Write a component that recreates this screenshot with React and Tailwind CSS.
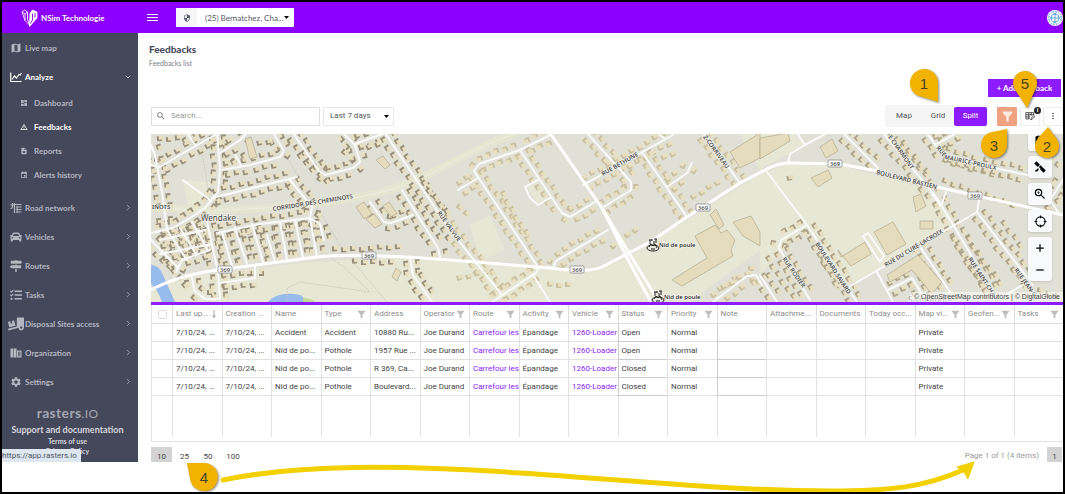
import { Fragment } from "react";
import {
  MdMap,
  MdDashboard,
  MdWarningAmber,
  MdDescription,
  MdEvent,
  MdSettings,
  MdFilterAlt,
  MdSearch,
  MdMoreVert,
  MdZoomIn,
  MdSecurity,
} from "react-icons/md";
import { FaCar, FaMapSigns, FaTasks, FaTruckLoading } from "react-icons/fa";
import { ChevronDown, ChevronRight } from "lucide-react";

/* ---------- sidebar ---------- */

function RoadNetworkIcon({ className }) {
  return (
    <svg viewBox="0 0 24 24" className={className} fill="none" stroke="currentColor" strokeWidth="2.4">
      <path d="M1 6h7M5 2v8q0 3-4 3M9 2v20M9 5h14M14 10h9M14 15h9M14 20h9M14 8v14" />
    </svg>
  );
}

function OrganizationIcon({ className }) {
  return (
    <svg viewBox="0 0 24 24" className={className} fill="currentColor">
      <path d="M1 3h6v18H1zM8 3h5v18H8zM14 7h9v14h-9zm2.5 2.5v9h4v-9z" fillRule="evenodd" />
      <path d="M17.5 11h2v2h-2zM17.5 15h2v2h-2z" />
    </svg>
  );
}

function AnalyzeIcon({ className }) {
  return (
    <svg viewBox="0 0 24 24" className={className} fill="none" stroke="currentColor" strokeWidth="2.4">
      <path d="M1.5 3v18H23" />
      <path d="M4 17l5-7 4 4 5-7 2 1 3-4" />
    </svg>
  );
}

const SUB_ITEMS = [
  { label: "Dashboard", Icon: MdDashboard },
  { label: "Feedbacks", Icon: MdWarningAmber, active: true },
  { label: "Reports", Icon: MdDescription },
  { label: "Alerts history", Icon: MdEvent },
];

const ITEMS = [
  { label: "Road network", Icon: RoadNetworkIcon },
  { label: "Vehicles", Icon: FaCar },
  { label: "Routes", Icon: FaMapSigns },
  { label: "Tasks", Icon: FaTasks },
  { label: "Disposal Sites access", Icon: FaTruckLoading, wide: true },
  { label: "Organization", Icon: OrganizationIcon },
  { label: "Settings", Icon: MdSettings },
];

function Sidebar() {
  return (
    <nav className="w-[136px] shrink-0 bg-[#45475b] font-['Lato',sans-serif] text-[8px] font-bold text-[#b4b6c2]">
      <a href="#live" className="flex h-[29px] items-center gap-[3px] pl-2">
        <MdMap className="size-3" />
        <span>Live map</span>
      </a>
      <button className="flex h-[29px] w-full items-center gap-[3px] pl-2 pr-[6px] text-white">
        <AnalyzeIcon className="size-3" />
        <span className="flex-1 text-left">Analyze</span>
        <ChevronDown className="size-2" />
      </button>
      {SUB_ITEMS.map(({ label, Icon, active }) => (
        <a
          key={label}
          href="#sub"
          className={`flex h-6 items-center gap-[6px] pl-[18px] ${active ? "text-white" : ""}`}
        >
          <Icon className="size-2" />
          <span>{label}</span>
        </a>
      ))}
      <div className="pt-[6px]">
        {ITEMS.map(({ label, Icon, wide }) => (
          <button key={label} className="flex h-[29px] w-full items-center gap-[3px] pl-2 pr-[5px]">
            <Icon className={wide ? "-mx-[2px] size-4 shrink-0" : "size-3 shrink-0"} />
            <span className="flex-1 text-left">{label}</span>
            <ChevronRight className="size-[9px]" />
          </button>
        ))}
      </div>
      <div className="flex flex-col items-center pb-[5px] pr-[5px] pt-[7px]">
        <p className="text-[14px] leading-5 tracking-wide text-[#a3a5b2]">
          rasters<span className="text-[12px] font-normal">.IO</span>
        </p>
        <a href="#doc" className="text-[9px] leading-[12px] text-[#d5d6de]">
          Support and documentation
        </a>
        <a href="#terms" className="text-[7px] leading-[10px] text-[#d5d6de]">
          Terms of use
        </a>
        <a href="#privacy" className="text-[7px] leading-[10px] text-[#d5d6de]">
          Privacy Policy
        </a>
      </div>
    </nav>
  );
}

/* ---------- top bar ---------- */

function TopBar() {
  return (
    <header className="flex h-[31px] items-center bg-[#8c00ff] font-['Lato',sans-serif] text-white">
      <div className="flex w-[136px] items-center gap-[3px] pl-[19px]">
        <svg viewBox="0 0 34 36" className="h-[18px] w-[17px]" fill="none" stroke="#fff" strokeWidth="1.8">
          <path d="M2 6l5-4 6 4v14l4 12-9-9z" />
          <path d="M2 6l6 4v13M8 10l5-4" />
          <path d="M18 9l5-7 9 4v12l-8 9-7 8z" fill="#fff" />
          <path d="M23 9v13l-4 7M28 8v9" stroke="#8c00ff" />
        </svg>
        <span className="text-[8px] font-bold leading-3">NSim Technologie</span>
      </div>
      <button aria-label="Menu" className="ml-[9px] flex w-[11px] flex-col gap-[2px]">
        <span className="h-px bg-white" />
        <span className="h-px bg-white" />
        <span className="h-px bg-white" />
      </button>
      <label className="relative ml-[18px] flex h-[19px] w-[118px] items-center rounded-[1px] bg-white text-[#555a6b]">
        <span className="flex h-full w-[21px] items-center justify-center bg-[#f7f7fa]">
          <MdSecurity className="size-2" />
        </span>
        <select
          aria-label="Organization"
          className="h-full flex-1 appearance-none pl-2 font-['Lato',sans-serif] text-[8px] outline-none"
        >
          <option>(25) Bernatchez, Cha...</option>
        </select>
        <svg viewBox="0 0 10 6" className="absolute right-[5px] h-[3px] w-[5px]">
          <path d="M0 0h10L5 6z" fill="#000" />
        </svg>
      </label>
      <svg viewBox="0 0 32 32" className="ml-auto size-4">
        <circle cx="16" cy="16" r="16" fill="#fff" />
        <g fill="none" stroke="#5aa5e0" strokeWidth="1.8">
          <rect x="9" y="9" width="14" height="14" rx="3" />
          <circle cx="16" cy="16" r="13" strokeDasharray="3 2" />
          <path d="M16 9v14M9 16h14M12 3l4 5 4-5M12 29l4-5 4 5M3 12l5 4-5 4M29 12l-5 4 5 4" />
        </g>
      </svg>
    </header>
  );
}

/* ---------- map ---------- */

const STREETS = [
  [[151, 165], [160, 167], [185, 152], [215, 135]],
  [[187, 133], [195, 145]],
  [[151, 145], [155, 155], [162, 192], [165, 215], [167, 228]],
  [[217, 133], [220, 168], [218, 192], [205, 208], [190, 218], [173, 228], [151, 233]],
  [[220, 153], [240, 140], [247, 133]],
  [[222, 170], [250, 165], [280, 157], [284, 151], [273, 133]],
  [[235, 155], [241, 165]],
  [[212, 198], [297, 177]],
  [[293, 133], [319, 171], [325, 175], [353, 168], [360, 162], [355, 145], [343, 133]],
  [[355, 144], [385, 133]],
  [[385, 133], [450, 230], [502, 295]],
  [[402, 190], [438, 248], [440, 257]],
  [[370, 202], [384, 222], [391, 223], [413, 215]],
  [[290, 180], [312, 207], [310, 218], [317, 257]],
  [[217, 233], [260, 224], [310, 218], [320, 224], [324, 240]],
  [[207, 222], [218, 272], [220, 299]],
  [[222, 232], [232, 266]],
  [[235, 228], [247, 264]],
  [[252, 224], [263, 262]],
  [[267, 235], [275, 262]],
  [[280, 222], [287, 260]],
  [[295, 220], [303, 258]],
  [[180, 228], [196, 254]],
  [[167, 230], [187, 260]],
  [[192, 222], [208, 250]],
  [[151, 240], [178, 268]],
  [[160, 240], [205, 230]],
  [[160, 254], [212, 244]],
  [[176, 272], [182, 260], [210, 250]],
  [[192, 277], [194, 290], [205, 299], [220, 299]],
  [[220, 283], [255, 278], [255, 267]],
  [[410, 258], [413, 275], [432, 302]],
  [[550, 135], [520, 150], [479, 164], [474, 171], [538, 267], [537, 272], [492, 302]],
  [[458, 190], [478, 178]],
  [[520, 150], [562, 213], [570, 217], [595, 202]],
  [[587, 133], [631, 182], [631, 190], [602, 208]],
  [[583, 185], [673, 135]],
  [[642, 152], [687, 217]],
  [[667, 187], [687, 173], [692, 163]],
  [[703, 133], [740, 183]],
  [[553, 268], [556, 261], [608, 230]],
  [[713, 302], [747, 276], [756, 275], [762, 285]],
  [[843, 133], [878, 168]],
  [[883, 133], [937, 198], [993, 292]],
  [[935, 145], [957, 133]],
  [[927, 133], [942, 154], [980, 165], [1027, 175]],
  [[807, 225], [857, 302]],
  [[807, 225], [781, 240], [779, 248], [810, 300]],
  [[760, 275], [777, 302]],
  [[977, 212], [1033, 285]],
  [[888, 290], [912, 278], [927, 302]],
  [[917, 242], [950, 292]],
  [[1063, 180], [1050, 200], [1058, 212]],
];

// streets without houses on them
const BARE_STREETS = [
  [[183, 180], [210, 200]],
  [[538, 180], [525, 187], [530, 198], [538, 205], [550, 198]],
  [[533, 275], [550, 302]],
  [[658, 133], [664, 138]],
  [[797, 133], [805, 145], [790, 154], [788, 163]],
  [[805, 145], [827, 133]],
  [[767, 172], [807, 225]],
  [[847, 288], [977, 212], [979, 200]],
  [[877, 272], [893, 302]],
  [[1000, 298], [1023, 285]],
  [[863, 236], [868, 233], [884, 256], [880, 262], [863, 236]],
  [[932, 194], [941, 206], [946, 192]],
];

const EXTRA_ROWS = [
  [[300, 150], [330, 185]],
  [[340, 150], [350, 158]],
  [[255, 145], [275, 140]],
  [[365, 150], [382, 142]],
  [[330, 250], [400, 247]],
  [[350, 262], [395, 262]],
  [[420, 180], [450, 215]],
  [[455, 205], [470, 215]],
  [[500, 190], [530, 240]],
  [[610, 250], [640, 225]],
  [[660, 160], [680, 150]],
  [[690, 200], [720, 180]],
  [[950, 235], [985, 290]],
  [[965, 235], [1005, 290]],
  [[1000, 220], [1025, 250]],
  [[945, 160], [1020, 180]],
  [[940, 180], [1015, 205]],
  [[900, 140], [930, 175]],
  [[720, 290], [755, 268]],
  [[765, 255], [795, 300]],
  [[820, 255], [840, 290]],
  [[455, 280], [490, 270]],
  [[545, 285], [575, 285]],
  [[1040, 150], [1063, 170]],
  [[1035, 290], [1063, 298]],
  [[155, 140], [180, 138]],
  [[165, 260], [190, 290]],
  [[785, 180], [800, 177]],
];

function housesAlong(points, offsets) {
  const houses = [];
  for (let i = 0; i < points.length - 1; i++) {
    const [x1, y1] = points[i];
    const [x2, y2] = points[i + 1];
    const len = Math.hypot(x2 - x1, y2 - y1);
    const ux = (x2 - x1) / len;
    const uy = (y2 - y1) / len;
    const angle = (Math.atan2(uy, ux) * 180) / Math.PI;
    for (let d = 5; d < len - 2; d += 9) {
      offsets.forEach((o) => {
        const jitter = ((d * 7 + i * 13 + x1) % 5) * 0.5 - 1;
        houses.push({
          x: x1 + ux * d - uy * (o + jitter),
          y: y1 + uy * d + ux * (o + jitter),
          angle,
        });
      });
    }
  }
  return houses;
}

const HOUSES = [
  ...STREETS.flatMap((s) => housesAlong(s, [-6, 6])),
  ...EXTRA_ROWS.flatMap((s) => housesAlong(s, [0])),
];

const toPoints = (pts) => pts.map((p) => p.join(",")).join(" ");

const SHIELDS = [
  [225, 270],
  [369, 256],
  [577, 270],
  [703, 208],
  [835, 164],
  [975, 196],
];

const STREET_LABELS = [
  { text: "INOTS", x: 152, y: 209, r: 0 },
  { text: "CORRIDOR DES CHEMINOTS", x: 273, y: 211, r: -9 },
  { text: "RUE VALVUE", x: 437, y: 213, r: 54 },
  { text: "RUE BÉTHUNE", x: 603, y: 176, r: -30 },
  { text: "Z-CORRIVEAU", x: 703, y: 137, r: 54 },
  { text: "E CHARMONT", x: 888, y: 137, r: 55 },
  { text: "BOULEVARD BASTIEN", x: 876, y: 174, r: 14 },
  { text: "BOULEVARD SAVARD", x: 815, y: 244, r: 57 },
  { text: "RUE RODIER", x: 782, y: 259, r: 55 },
  { text: "RUE DU CURÉ-LACROIX", x: 886, y: 267, r: -31 },
  { text: "RUE SAINT-CHA", x: 968, y: 259, r: 57 },
  { text: "RUE JEAN-C", x: 1014, y: 270, r: 54 },
];

function PotholeMarker({ x, y }) {
  return (
    <g transform={`translate(${x} ${y})`} fill="none" stroke="#222" strokeWidth="1">
      <ellipse cx="0" cy="3" rx="6" ry="3" fill="#e8e8de" />
      <path d="M-4 2l2-3 2 2 2-2 2 4M-3-5v4M-1-6v2M1-4v3M3-6v4M-4-5h3M1-6h3M-2 4h4" />
    </g>
  );
}

function MapDrawing() {
  return (
    <svg
      viewBox="151 134 912 168"
      preserveAspectRatio="xMinYMin slice"
      className="block h-[168px] w-full"
      role="img"
      aria-label="Map"
    >
      <rect x="151" y="134" width="912" height="168" fill="#e0e0d6" />
      <g fill="#e6e7d5">
        <path d="M151 290L190 276L300 263L400 257L540 268L593 270L627 258L760 174V250L690 302H151z" />
        <path d="M760 174L790 164L842 166L930 190L955 222L847 287L807 225L760 275z" />
        <path d="M183 180L210 182L209 200L188 206z" />
        <path d="M470 225L490 215L505 250L480 262z" />
        <path d="M527 187l11-5 11 16-11 6z" />
        <path d="M740 134h60l5 10-45 26z" />
      </g>
      <path d="M151 207C220 213 280 209 353 198S450 156 517 133" fill="none" stroke="#e5e6d2" strokeWidth="8" />
      <path d="M151 207C220 213 280 209 353 198S450 156 517 133" fill="none" stroke="#f0f0e6" strokeWidth="1" strokeDasharray="2 1" />
      <path d="M151 265q8 0 12 10l12 27h-13q-5-14-11-18z" fill="#97bbec" />
      <path d="M268 302q6-7 17-8 14-1 18 3l2 5z" fill="#97bbec" />
      <path d="M303 298q8 0 12 4h-12z" fill="#c0dc98" />
      <g fill="none" stroke="#c6c6bd" strokeWidth="0.8" strokeDasharray="2 1">
        <path d="M272 133L343 250L387 302" />
        <path d="M200 140L210 200M320 250L345 268L370 292M287 302V288L300 282L370 292" />
      </g>

      {HOUSES.map((h, i) => (
        <g key={i} transform={`translate(${h.x} ${h.y}) rotate(${h.angle})`}>
          <rect x="-2" y="-2.5" width="6" height="5" fill="#e6dfc1" />
          <path
            d="M-3-2.5h2v3.5h3v1.5h-5z"
            fill={h.x < 450 ? "#978f79" : h.x < 760 ? "#c9c0a0" : "#aca388"}
          />
        </g>
      ))}

      <g fill="#e5dcbd" stroke="#aaa184" strokeWidth="0.6">
        <path d="M672 280l35-22-12-22 20-11 6 8 6-3 8 10-4 10 2 6-51 30z" />
        <path d="M730 152l30-19v25l-20 10zM733 222l18-6 9 16v14l-17-10zM710 215l6-6 8 16-5 4z" />
        <path d="M760 138l28-5 2 8-30 18z" />
        <path d="M820 147l12-8 6 12-12 7zM811 178l17-8 4 8-14 9z" />
        <path d="M874 232l19-10 13 22-19 11zM838 250l3 7 24-15 6 12-20 12z" />
        <path d="M887 275l31-20 24 27-10 12-20-24-22 12z" />
        <path d="M920 221h13v8h-13zM913 197l8-3 5 12-10 6z" />
        <path d="M356 207l8-5 8 12-8 5zM383 206l6-4 8 11-6 4zM366 219l8-5 8 10-7 4z" />
        <path d="M376 160l7-4 7 9-5 4zM396 268l5 4-4 9-5-4zM245 139l6-2 6 20-7 2z" />
      </g>

      <g fill="none" stroke="#fafafa" strokeWidth="2" strokeLinejoin="round" strokeLinecap="round">
        {[...STREETS, ...BARE_STREETS].map((s, i) => (
          <polyline key={i} points={toPoints(s)} />
        ))}
      </g>
      <g fill="none" stroke="#fff" strokeWidth="3" strokeLinejoin="round">
        <path d="M151 290Q180 274 225 269L317 257Q360 253 450 260L550 268Q590 273 602 267L650 242L687 217L740 183L765 170Q778 163 790 163L840 164L877 171L937 187L1063 215" />
        <path d="M550 133L602 208L632 258L659 302" />
        <path d="M602 208L627 258L651 302" />
      </g>

      {SHIELDS.map(([x, y]) => (
        <g key={x}>
          <rect x={x - 7} y={y - 4} width="14" height="7" rx="1" fill="#fff" stroke="#888" strokeWidth="0.8" />
          <text x={x} y={y + 2} textAnchor="middle" className="fill-[#444] font-['Noto_Sans',sans-serif] text-[6px] font-medium">
            369
          </text>
        </g>
      ))}

      <g
        className="fill-[#4c4c4c] font-['Noto_Sans',sans-serif] text-[6px] font-semibold"
        stroke="#f2f2ea"
        strokeWidth="1.2"
        paintOrder="stroke"
      >
        {STREET_LABELS.map((l) => (
          <text key={l.text} transform={`translate(${l.x} ${l.y}) rotate(${l.r})`}>
            {l.text}
          </text>
        ))}
        <path id="proulx" d="M936 148L945 159L1000 171" fill="none" stroke="none" />
        <text>
          <textPath href="#proulx">RUE MAURICE-PROULX</textPath>
        </text>
      </g>
      <g
        className="font-['Noto_Sans',sans-serif]"
        stroke="#f4f4ee"
        strokeWidth="1.5"
        paintOrder="stroke"
        fill="#444"
      >
        <text x="201" y="221" className="text-[8px]">Wendake</text>
        <text x="908" y="303" className="text-[8px]" fill="#888">Saint-André</text>
        <text x="659" y="247" className="text-[6px] font-medium" fill="#222">Nid de poule</text>
        <text x="664" y="299" className="text-[6px] font-medium" fill="#222">Nid de poule</text>
      </g>
      <PotholeMarker x={653} y={245} />
      <PotholeMarker x={658} y={297} />
    </svg>
  );
}

const CONTROL =
  "flex h-[22px] w-6 items-center justify-center rounded-[3px] bg-[#f8f9fa] text-black shadow";

function MapPanel() {
  return (
    <section className="relative mt-[7px] overflow-hidden border-b-[3px] border-[#8c1bff]">
      <MapDrawing />
      <div className="absolute -top-[5px] right-[11px] flex flex-col gap-[5px]">
        <button aria-label="Layers" className={CONTROL}>
          <MdMap className="size-3" />
        </button>
        <button aria-label="Satellite view" className={CONTROL}>
          <svg viewBox="0 0 24 24" className="size-[14px]" fill="currentColor">
            <path d="M2 6l4-4 6 6-4 4zM12 16l4-4 6 6-4 4zM10 12l3-3 3 3-3 3z" />
            <path d="M4 20q5 0 6-5l-2-1q0 3-4 3z" />
          </svg>
        </button>
        <button aria-label="Search area" className={CONTROL}>
          <MdZoomIn className="size-[14px]" />
        </button>
        <button aria-label="Locate" className={CONTROL}>
          <svg viewBox="0 0 24 24" className="size-[13px]" fill="none" stroke="currentColor" strokeWidth="2">
            <circle cx="12" cy="12" r="8.5" />
            <path d="M12 1v5M12 18v5M1 12h5M18 12h5" />
          </svg>
        </button>
        <div className="flex flex-col rounded-[3px] bg-[#f8f9fa] text-black shadow">
          {["M12 3v18M3 12h18", "M3 12h18"].map((d, i) => (
            <button
              key={d}
              aria-label={i === 0 ? "Zoom in" : "Zoom out"}
              className="flex h-[22px] w-6 items-center justify-center"
            >
              <svg viewBox="0 0 24 24" className="size-[10px]" fill="none" stroke="currentColor" strokeWidth="3">
                <path d={d} />
              </svg>
            </button>
          ))}
        </div>
      </div>
      <p className="absolute bottom-0 right-0 bg-white/50 pl-1 pr-[3px] font-['Liberation_Sans',sans-serif] text-[7px] leading-[10px] text-[#444]">
        © <a href="#osm">OpenStreetMap contributors</a> | © <a href="#dg">DigitalGlobe</a>
      </p>
    </section>
  );
}

/* ---------- grid ---------- */

const COLUMNS = [
  { key: "updated", label: "Last up...", sorted: true },
  { key: "created", label: "Creation ..." },
  { key: "name", label: "Name" },
  { key: "type", label: "Type", filter: true },
  { key: "address", label: "Address" },
  { key: "operator", label: "Operator", filter: true },
  { key: "route", label: "Route", filter: true, link: true },
  { key: "activity", label: "Activity", filter: true },
  { key: "vehicle", label: "Vehicle", filter: true, link: true },
  { key: "status", label: "Status", filter: true, editable: true },
  { key: "priority", label: "Priority", filter: true },
  { key: "note", label: "Note", editable: true },
  { key: "attachments", label: "Attachme..." },
  { key: "documents", label: "Documents" },
  { key: "today", label: "Today occ..." },
  { key: "visibility", label: "Map vi...", filter: true },
  { key: "geofence", label: "Geofen...", filter: true },
  { key: "tasks", label: "Tasks", filter: true },
];

const common = {
  updated: "7/10/24, ...",
  created: "7/10/24, ...",
  operator: "Joe Durand",
  route: "Carrefour les",
  activity: "Épandage",
  vehicle: "1260-Loader",
  priority: "Normal",
  visibility: "Private",
};

const ROWS = [
  { ...common, name: "Accident", type: "Accident", address: "10880 Ru...", status: "Open" },
  { ...common, name: "Nid de po...", type: "Pothole", address: "1957 Rue ...", status: "Open" },
  { ...common, name: "Nid de po...", type: "Pothole", address: "R 369, Ca...", status: "Closed" },
  { ...common, name: "Nid de po...", type: "Pothole", address: "Boulevard...", status: "Closed" },
];

function FeedbackTable() {
  return (
    <div className="border-b border-l border-[#e2e2e2] pb-1">
      <table className="w-full table-fixed border-separate border-spacing-0 font-['Roboto',sans-serif] text-[8px] leading-[10px] text-[#444]">
        <thead>
          <tr className="h-[19px] text-[#8e8e8e]">
            <th className="w-5 border-b border-[#ddd] p-0">
              <input
                type="checkbox"
                aria-label="Select all"
                className="mx-auto block size-[9px] appearance-none rounded-[1px] border border-[#ddd]"
              />
            </th>
            {COLUMNS.map((c) => (
              <th key={c.key} className="border-b border-l border-[#ddd] p-0 pl-[3px] pr-1 text-left font-normal">
                <div className="flex items-center justify-between whitespace-nowrap">
                  <span>{c.label}</span>
                  {c.sorted && (
                    <svg viewBox="0 0 6 12" className="mr-[2px] h-2 w-1" fill="none" stroke="#777">
                      <path d="M3 0v11M1 8l2 3 2-3" />
                    </svg>
                  )}
                  {c.filter && <MdFilterAlt className="-mx-px size-[11px] shrink-0 text-[#bdbdbd]" />}
                </div>
              </th>
            ))}
          </tr>
        </thead>
        <tbody>
          {ROWS.map((row, i) => (
            <tr key={i} className="h-[18px]">
              <td className="border-b border-[#e2e2e2] p-0" />
              {COLUMNS.map((c) => (
                <td
                  key={c.key}
                  className={`overflow-hidden whitespace-nowrap border-b border-l p-0 pl-[3px] pt-px ${
                    c.editable ? "border-[#ccc]" : "border-[#e2e2e2]"
                  }`}
                >
                  {c.link ? (
                    <a href="#item" className="text-[#8c1bff]">
                      {row[c.key]}
                    </a>
                  ) : (
                    row[c.key]
                  )}
                </td>
              ))}
            </tr>
          ))}
          <tr className="h-[41px]">
            <td className="p-0" />
            {COLUMNS.map((c) => (
              <td key={c.key} className="border-l border-[#e2e2e2] p-0" />
            ))}
          </tr>
        </tbody>
      </table>
    </div>
  );
}

function Pager() {
  return (
    <div className="mt-[5px] flex h-[15px] items-stretch overflow-hidden font-['Roboto',sans-serif] text-[8px] leading-[10px] text-[#444]">
      <button className="w-[21px] bg-[#d3d3d3] pt-1">10</button>
      <button className="w-[25px] pt-1">25</button>
      <button className="w-[22px] pt-1">50</button>
      <button className="w-[28px] pt-1">100</button>
      <span className="ml-auto pr-2 pt-1 text-[#999]">Page 1 of 1 (4 items)</span>
      <button className="mr-px w-[15px] bg-[#d3d3d3] pt-1">1</button>
    </div>
  );
}

/* ---------- toolbar ---------- */

function Toolbar() {
  return (
    <div className="mt-2 flex h-[22px] items-center font-['Roboto',sans-serif] text-[8px] text-[#555]">
      <label className="flex h-[19px] w-[169px] items-center gap-[5px] rounded-[1px] border border-[#ddd] pl-1">
        <MdSearch className="size-[10px] text-[#777]" />
        <input
          type="text"
          placeholder="Search..."
          className="min-w-0 flex-1 outline-none placeholder:text-[#999]"
        />
      </label>
      <label className="relative ml-[3px] flex h-[19px] w-[71px] items-center rounded-[1px] border border-[#e8e8e8]">
        <select aria-label="Period" className="h-full w-full appearance-none pl-[6px] outline-none">
          <option>Last 7 days</option>
        </select>
        <svg viewBox="0 0 10 6" className="absolute right-1 h-[3px] w-[5px]">
          <path d="M0 0h10L5 6z" fill="#000" />
        </svg>
      </label>
      <div className="ml-auto flex h-[22px] items-center rounded-[3px] bg-[#f5f5f6] p-px">
        <button className="w-9 text-center">Map</button>
        <button className="w-8 text-center">Grid</button>
        <button className="h-[19px] w-[33px] rounded-[2px] bg-[#8c1bff] text-center text-white">
          Split
        </button>
      </div>
      <button
        aria-label="Filter"
        className="ml-[9px] flex h-[19px] w-5 items-center justify-center rounded-[1px] bg-[#eea281] text-[#fbe8df]"
      >
        <MdFilterAlt className="size-[15px]" />
      </button>
      <button
        aria-label="Edit columns"
        className="relative ml-[3px] flex h-[19px] w-5 items-center justify-center border border-[#eee] text-[#333]"
      >
        <svg viewBox="0 0 24 24" className="size-[10px]" fill="none" stroke="currentColor" strokeWidth="2">
          <path d="M11 19H2V4h19v6M2 9h19M2 14h10M9 4v15M15 4v7" />
          <path d="M14 21l1-4 6-6 2 3-6 6z" fill="#fff" />
        </svg>
        <span className="absolute -right-[2px] -top-[1px] flex size-[7px] items-center justify-center rounded-full bg-[#222] text-[6px] font-bold leading-none text-white">
          i
        </span>
      </button>
      <button
        aria-label="More"
        className="ml-[3px] flex h-[19px] w-5 items-center justify-center border border-[#eee] text-[#444]"
      >
        <MdMoreVert className="size-[10px]" />
      </button>
    </div>
  );
}

/* ---------- annotations ---------- */

const CALLOUTS = [
  { n: 1, x: 924, y: 83, r: 14, tip: [938, 102] },
  { n: 5, x: 1025, y: 83, r: 12, tip: [1027, 108] },
  { n: 3, x: 994, y: 145, r: 13, tip: [1007, 129] },
  { n: 2, x: 1047, y: 146, r: 12, tip: [1048, 127] },
  { n: 4, x: 204, y: 477, r: 14, tip: [187, 463] },
];

// teardrop: circle joined to its tip by the two tangents
function dropPath({ x, y, r, tip }) {
  const dist = Math.hypot(tip[0] - x, tip[1] - y);
  const base = Math.atan2(tip[1] - y, tip[0] - x);
  const spread = Math.acos(r / dist);
  const at = (a) => `${x + r * Math.cos(a)} ${y + r * Math.sin(a)}`;
  return `M${tip.join(" ")}L${at(base + spread)}A${r} ${r} 0 1 1 ${at(base - spread)}Z`;
}

function Annotations() {
  return (
    <svg className="pointer-events-none absolute left-0 top-0 h-[492px] w-full" aria-hidden="true">
      <path
        d="M223 480C300 464 400 465 520 473S720 490 830 491C890 491 925 487 963 470"
        fill="none"
        stroke="#f3d000"
        strokeWidth="5"
        strokeLinecap="round"
      />
      <path d="M974 462l-6 17-4-7-7-5z" fill="#f3d000" stroke="#f3d000" strokeWidth="1" />
      {CALLOUTS.map((c) => (
        <Fragment key={c.n}>
          <path d={dropPath(c)} fill="#f2b200" className="drop-shadow-[1px_1px_1px_#0007]" />
          <text
            x={c.x}
            y={c.y + 6}
            textAnchor="middle"
            className="fill-[#4a4230] font-['Liberation_Sans',sans-serif] text-[15px]"
          >
            {c.n}
          </text>
        </Fragment>
      ))}
    </svg>
  );
}

export default function App() {
  return (
    <div className="relative min-h-screen overflow-hidden bg-white">
      <div className="min-h-screen border-2 border-black">
        <TopBar />
        <div className="relative flex">
          <Sidebar />
          <main className="min-w-0 flex-1 pl-[13px]">
            <div className="-ml-[2px] pt-[10px] font-['Lato',sans-serif] text-[#4b4d60]">
              <h1 className="text-[10px] font-black leading-[12px]">Feedbacks</h1>
              <p className="mt-[3px] text-[7px] leading-[10px] text-[#7c7e8c]">Feedbacks list</p>
            </div>
            <div className="mt-[11px] flex justify-end pr-[2px]">
              <button className="h-[18px] w-[73px] bg-[#8c1bff] font-['Lato',sans-serif] text-[8px] font-bold text-white">
                + Add feedback
              </button>
            </div>
            <Toolbar />
            <MapPanel />
            <FeedbackTable />
            <Pager />
          </main>
          <div className="absolute bottom-0 left-0 h-[13px] rounded-tr-[2px] bg-[#dee6ef] pr-1 font-['Roboto',sans-serif] text-[8px] leading-[13px] text-[#4c5563]">
            https://app.rasters.io
          </div>
        </div>
      </div>
      <Annotations />
    </div>
  );
}
